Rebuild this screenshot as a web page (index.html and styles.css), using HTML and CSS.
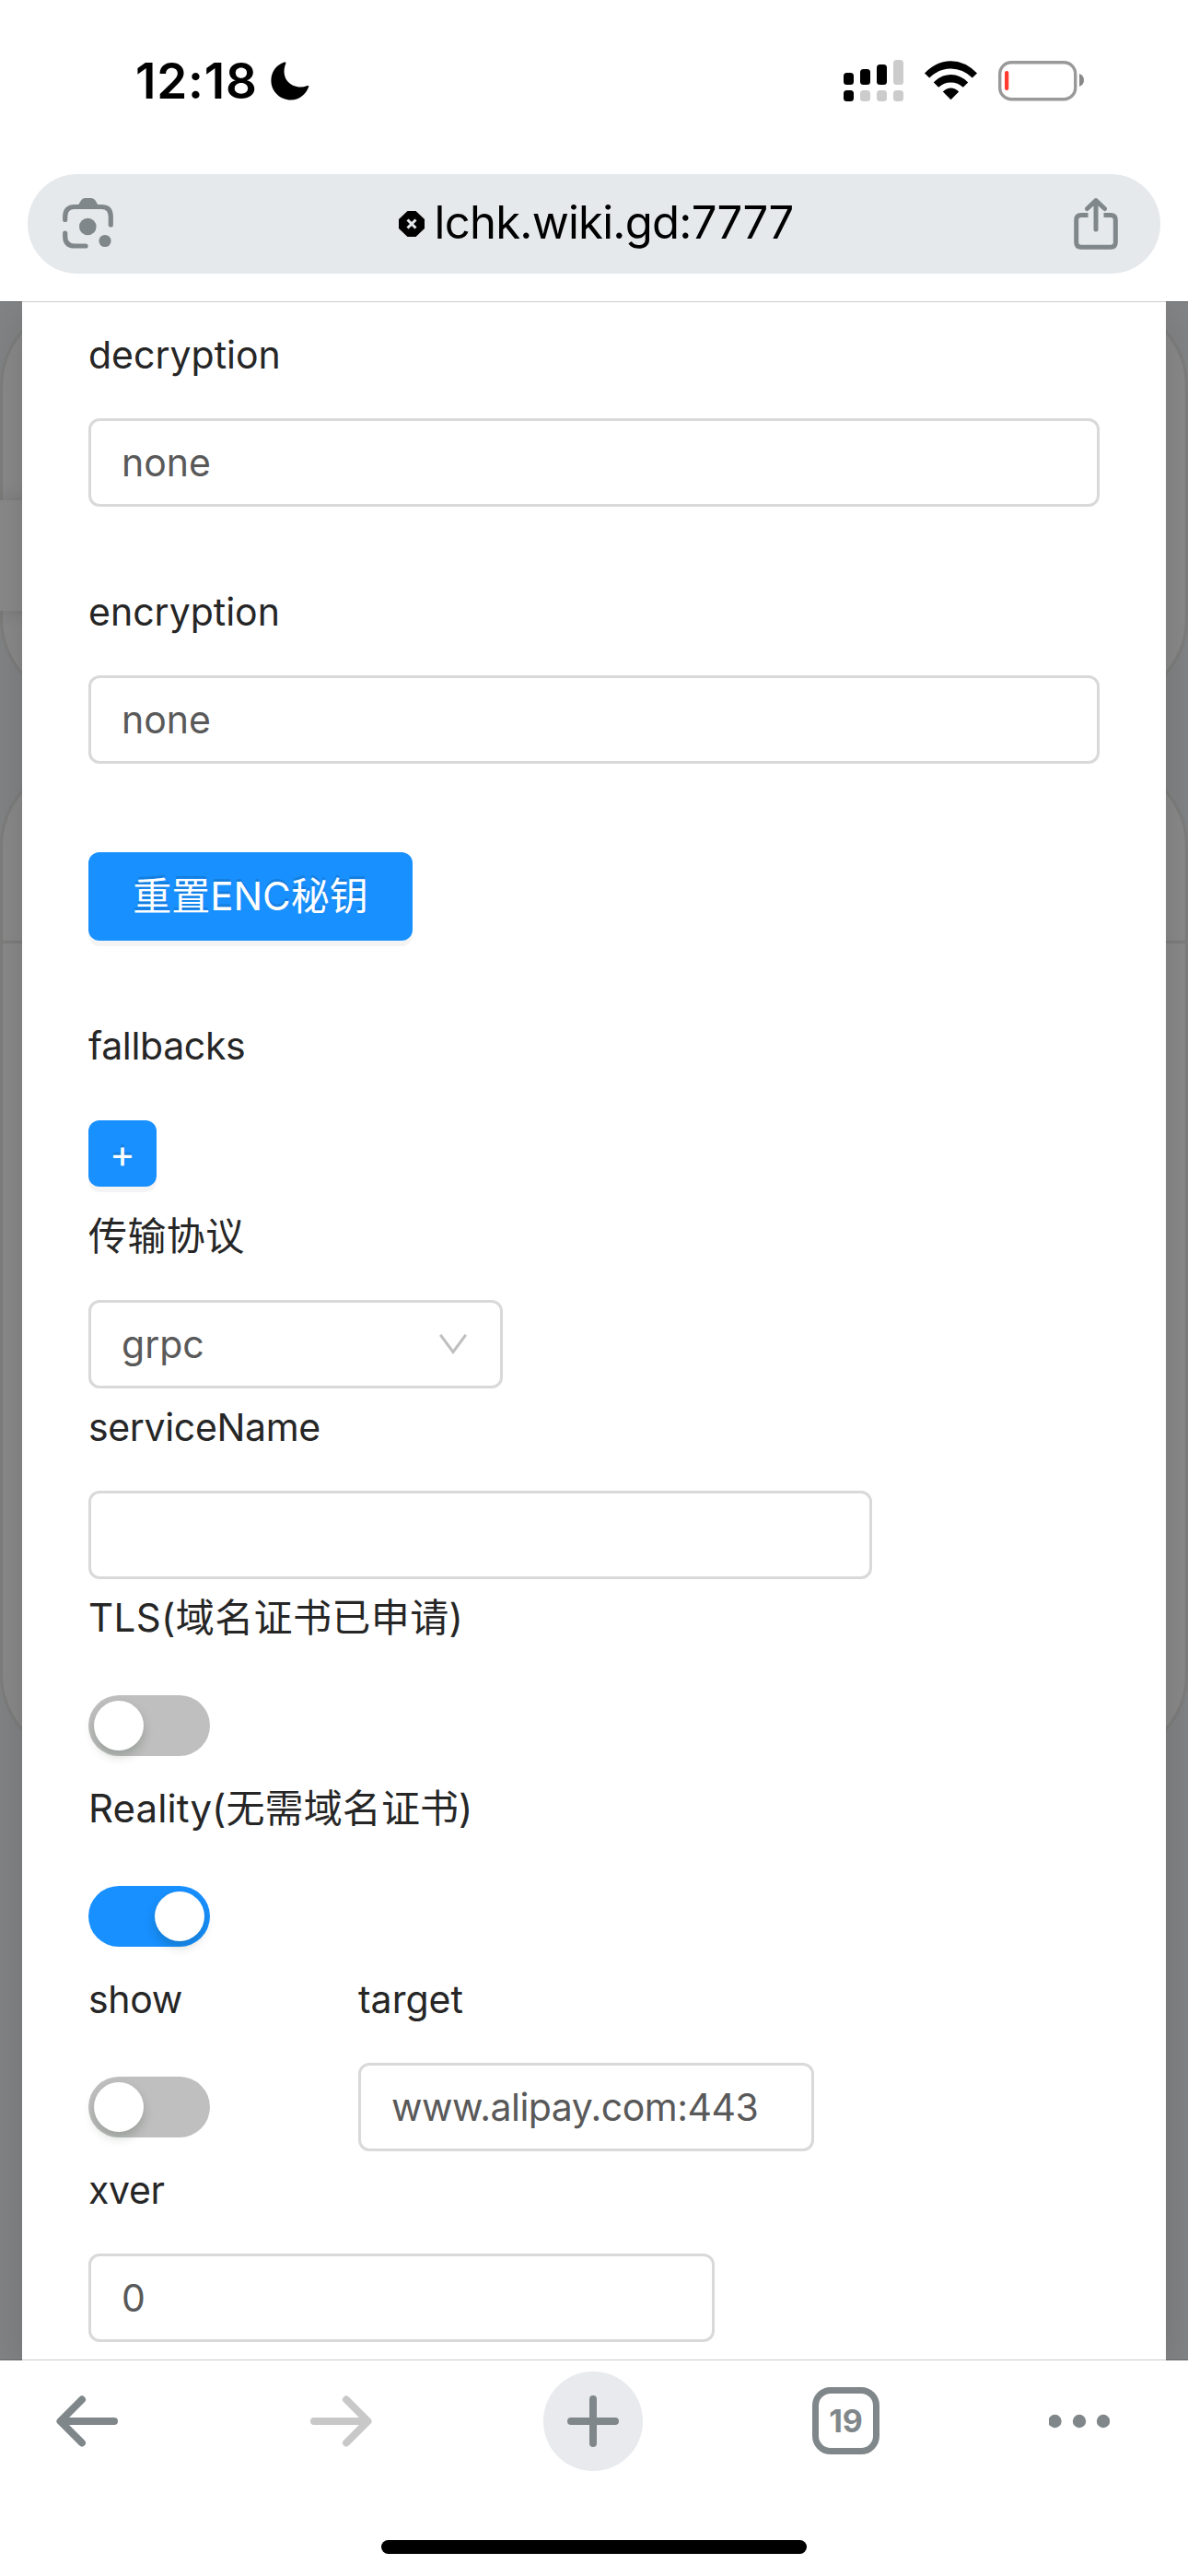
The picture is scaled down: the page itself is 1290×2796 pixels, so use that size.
FILE: index.html
```html
<!DOCTYPE html>
<html lang="zh-CN">
<head>
<meta charset="utf-8">
<title>lchk.wiki.gd:7777</title>
<link rel="stylesheet" href="styles.css">
</head>
<body>
<div class="phone">
  <header class="status">
    <span class="clock">12:18</span>
    <svg class="moon" width="42" height="42" viewBox="0 0 42 42"><path d="M14.5 0.6C16.200 0 16.800 .7 16.200 2.200C13.500 9 14 16 18.500 21.500C23 27 32 29 39 26.300C40.800 25.600 41.700 26 41.100 27.600C37.800 36 31 41.500 22 41.500C10 41.500 .4 32 .4 20.500C.4 11.500 5.500 3.700 14.500 .6Z"/></svg>
    <svg class="indicators" width="262" height="46" viewBox="0 0 262 46">
      <rect x="0" y="14" width="11" height="13" rx="3.500"/><rect x="18" y="10" width="11" height="17" rx="3.500"/><rect x="36" y="5" width="11" height="22" rx="3.500"/>
      <g fill="#ccc"><rect x="54" y="0" width="11" height="27" rx="3.500"/><rect x="18" y="33" width="11" height="12" rx="3.500"/><rect x="36" y="33" width="11" height="12" rx="3.500"/><rect x="54" y="33" width="11" height="12" rx="3.500"/></g>
      <rect x="0" y="33" width="11" height="12" rx="3.500"/>
      <path d="M88 14.500Q101 1.200 116.500 1.200T145 14.500L139.800 19.500Q129.500 9.500 116.500 9.500T93.200 19.500ZM97.800 24.500Q106 16 116.500 16T135.200 24.500L129.800 29.800Q124 24.500 116.500 24.500T103.200 29.800ZM107.800 34.500Q112 30.500 116.500 30.500T125.200 34.500L116.500 43.300Z"/>
      <rect x="169.700" y="2.700" width="82" height="40" rx="12.500" fill="none" stroke="#999" stroke-width="3.400"/>
      <path d="M256 15Q261 17 261 22T256 29Z" fill="#888"/>
      <rect x="175" y="12" width="4.300" height="21" rx="2" fill="#ff3b30"/>
    </svg>
  </header>

  <div class="omnibox">
    <svg class="lens" width="56" height="56" viewBox="0 0 56 56" fill="#80878a">
      <path d="M17 7.500L20 2.500Q21.500 0 24 0H31Q34 0 35.500 2.500L39 8.500H16Z"/>
      <path d="M2.700 23.500V20Q2.700 9.500 13 9.500H42Q52.300 9.500 52.300 20V29M2.700 38V41.500Q2.700 52 13 52H25" fill="none" stroke="#80878a" stroke-width="5.200" stroke-linecap="round"/>
      <circle cx="27.300" cy="31" r="9.300"/><circle cx="46" cy="46.500" r="6.600"/>
    </svg>
    <div class="address">
      <svg width="28" height="28" viewBox="0 0 28 28"><path d="M9.500 0H18.500L28 9V19L18.500 28H9.500L0 19V9Z"/><path d="M9.500 9.500L18.500 18.500M18.500 9.500L9.500 18.500" stroke="#e5e9ec" stroke-width="3"/></svg>
      <span class="url">lchk.wiki.gd:7777</span>
    </div>
    <svg class="share" width="48" height="56" viewBox="0 0 48 56" fill="none" stroke="#80878a" stroke-width="5" stroke-linecap="round" stroke-linejoin="round">
      <path d="M15.500 18.500H8Q2.700 18.500 2.700 23.500V48Q2.700 53.200 8 53.200H40Q45.300 53.200 45.300 48V23.500Q45.300 18.500 40 18.500H32.500" stroke-linecap="butt"/><path d="M24 34V3M14.500 11.500L24 2.700L33.500 11.500"/>
    </svg>
  </div>

  <main class="viewport">
    <div class="backdrop">
      <div class="panel panel-top"></div>
      <div class="panel panel-main"><div class="panel-head"></div></div>
      <div class="drawer-handle"></div>
    </div>
    <form class="modal">
      <div class="field spaced"><label class="label">decryption</label><div class="input full">none</div></div>
      <div class="field spaced"><label class="label">encryption</label><div class="input full">none</div></div>
      <div class="action"><button type="button" class="btn">重置ENC秘钥</button></div>
      <div class="field"><label class="label tight">fallbacks</label><div class="control"><button type="button" class="btn small" aria-label="add">+</button></div></div>
      <div class="field"><label class="label cjk">传输协议</label>
        <div class="input select">grpc<svg width="30" height="23" viewBox="0 0 30 23" fill="none" stroke="#bfbfbf" stroke-width="3"><path d="M1.200 .8L15 19.500L28.800 .8"/></svg></div></div>
      <div class="field"><label class="label tight">serviceName</label><div class="input service"></div></div>
      <div class="field"><label class="label cjk">TLS(域名证书已申请)</label><div class="control"><i class="switch"></i></div></div>
      <div class="field"><label class="label cjk reality">Reality(无需域名证书)</label><div class="control"><i class="switch on"></i></div></div>
      <div class="row">
        <div class="field show"><label class="label tight">show</label><div class="control"><i class="switch"></i></div></div>
        <div class="field"><label class="label">target</label><div class="input target">www.alipay.com:443</div></div>
      </div>
      <div class="field"><label class="label tight">xver</label><div class="input xver">0</div></div>
    </form>
  </main>

  <nav class="toolbar">
    <div class="tool"><svg width="68" height="56" viewBox="0 0 68 56" fill="none" stroke="#80878a" stroke-width="8" stroke-linecap="round" stroke-linejoin="round"><path d="M63 28H5M28 4.500L4.500 28L28 51.500"/></svg></div>
    <div class="tool"><svg width="68" height="56" viewBox="0 0 68 56" fill="none" stroke="#c8c8c8" stroke-width="8" stroke-linecap="round" stroke-linejoin="round"><path d="M5 28H63M40 4.500L63.500 28L40 51.500"/></svg></div>
    <div class="tool new-tab"><svg width="56" height="56" viewBox="0 0 56 56" stroke="#80878a" stroke-width="8" stroke-linecap="round"><path d="M28 4V52M4 28H52"/></svg></div>
    <div class="tool"><div class="tabs">19</div></div>
    <div class="tool more"><svg width="66" height="16" viewBox="1 0 66 16" fill="#80878a"><circle cx="7.500" cy="8" r="7.200"/><circle cx="34" cy="8" r="7.200"/><circle cx="60" cy="8" r="7.200"/></svg></div>
  </nav>
  <div class="home"></div>
</div>
</body>
</html>
```
FILE: styles.css
```css
* { box-sizing: border-box; }
body { margin: 0; background: #fff; font-family: Inter, "Noto Sans CJK SC", sans-serif; }
svg { display: block; flex: none; }
.phone { width: 1290px; height: 2796px; display: flex; flex-direction: column; overflow: hidden; background: #fff; }

.status { height: 189px; padding: 0 112px 14px 147px; display: flex; align-items: center; color: #000; }
.clock { font-size: 53px; font-weight: 600; line-height: 60px; letter-spacing: 0.8px; }
.moon { margin-left: 14px; }
.indicators { margin-left: auto; }

.omnibox { height: 108px; margin: 0 30px 30px; padding: 0 46px 0 38px; display: flex; align-items: center; justify-content: space-between; background: #e5e9ec; border-radius: 54px; }
.address { display: flex; align-items: center; gap: 11px; padding-left: 4px; }
.url { font-size: 49px; line-height: 60px; letter-spacing: -0.75px; padding-bottom: 2px; }

.viewport { position: relative; height: 2235px; overflow: hidden; background: #828486; }
.viewport::after { content: ""; position: absolute; inset: 0; border-top: 1px solid rgba(0,0,0,.2); border-bottom: 1px solid rgba(0,0,0,.2); }
.backdrop { padding-top: 2px; }
.panel { border: 3px solid #7e7e7d; background: #8a8a8a; }
.panel-top { height: 433px; border-radius: 90px; margin-bottom: 66px; }
.panel-main { height: 1080px; border-radius: 90px; }
.panel-head { height: 193px; border-bottom: 3px solid #7e7e7d; }
.drawer-handle { position: absolute; left: 0; top: 216px; width: 60px; height: 120px; background: #8a8a8a; box-shadow: 0 0 18px rgba(0,0,0,.14); }

.modal { position: absolute; inset: 0 24px; padding: 16px 72px; background: #fff; box-shadow: 0 12px 48px rgba(0,0,0,.15); }
.field.spaced { margin-bottom: 72px; }
.label { display: block; height: 84px; margin-bottom: 27px; line-height: 84px; font-size: 41px; color: #262626; white-space: nowrap; }
.label.tight { letter-spacing: -0.35px; }
.label.cjk { font-size: 42px; letter-spacing: 0.4px; }
.label.reality { letter-spacing: 0.1px; }
.input { height: 96px; padding: 0 33px; display: flex; align-items: center; border: 3px solid #d9d9d9; border-radius: 12px; font-size: 41px; line-height: 60px; color: #595959; white-space: nowrap; }
.full { width: 1098px; }
.select { width: 450px; justify-content: space-between; padding-right: 36px; }
.service { width: 851px; }
.target { width: 495px; letter-spacing: -0.5px; }
.xver { width: 680px; }
.control { height: 96px; display: flex; align-items: center; }
.action { margin: 96px 0 72px; }
.btn { width: 352px; height: 96px; padding: 0; border: 0; border-radius: 12px; background: #1890ff; box-shadow: 0 6px 0 rgba(0,0,0,.045); color: #fff; font: 400 42px/60px Inter, "Noto Sans CJK SC", sans-serif; text-shadow: 0 -3px 0 rgba(0,0,0,.12); display: flex; align-items: center; justify-content: center; }
.small { width: 74px; height: 72px; }
.switch { width: 132px; height: 66px; padding: 6px; border-radius: 33px; background: #bfbfbf; display: flex; }
.switch::before { content: ""; width: 54px; height: 54px; border-radius: 50%; background: #fff; box-shadow: 0 6px 12px rgba(0,35,11,.2); }
.switch.on { background: #1890ff; justify-content: flex-end; }
.row { display: flex; }
.show { width: 293px; }

.toolbar { height: 131px; padding: 0 43px 0 41px; display: flex; align-items: center; justify-content: space-between; }
.tool { width: 108px; height: 108px; display: flex; align-items: center; justify-content: center; }
.new-tab { border-radius: 50%; background: #e8eaee; }
.more { justify-content: flex-start; }
.tabs { width: 73px; height: 73px; border: 7px solid #80878a; border-radius: 20px; display: flex; align-items: center; justify-content: center; color: #80878a; font-size: 34px; font-weight: 700; line-height: 40px; }
.home { width: 462px; height: 15px; margin: 64px auto 0; border-radius: 8px; background: #000; }
```
